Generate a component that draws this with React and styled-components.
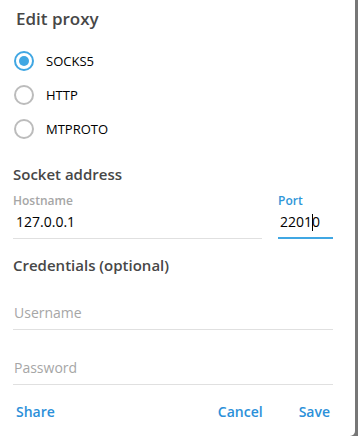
import React, { useState } from "react";
import styled, { createGlobalStyle } from "styled-components";

const GlobalStyle = createGlobalStyle`
  html, body {
    margin: 0;
    padding: 0;
    background: #777777;
  }
  body {
    font-family: "Open Sans", "Liberation Sans", sans-serif;
  }
`;

const Page = styled.div`
  width: 358px;
  height: 436px;
  overflow: hidden;
`;

const Dialog = styled.div`
  width: 355px;
  height: 436px;
  background: #ffffff;
  border-bottom-right-radius: 5px;
  box-sizing: border-box;
  display: flex;
  flex-direction: column;
  padding: 0 22px 0 13px;
`;

const Title = styled.h2`
  margin: 7px 0 0 3px;
  font-size: 17px;
  line-height: 24px;
  font-weight: 600;
  color: #474747;
`;

const RadioList = styled.div`
  display: flex;
  flex-direction: column;
  margin-top: 13px;
`;

const RadioRow = styled.label`
  display: flex;
  align-items: center;
  gap: 12px;
  height: 34px;
  padding-left: 1px;
  cursor: pointer;
`;

const RadioCircle = styled.span`
  box-sizing: border-box;
  width: 20px;
  height: 20px;
  border-radius: 50%;
  border: 2px solid ${(p) => (p.checked ? "#40a7e3" : "#bcbcbc")};
  display: flex;
  align-items: center;
  justify-content: center;

  &::after {
    content: "";
    width: 10px;
    height: 10px;
    border-radius: 50%;
    background: #40a7e3;
    display: ${(p) => (p.checked ? "block" : "none")};
  }
`;

const RadioText = styled.span`
  font-size: 13px;
  color: #000000;
`;

const Section = styled.h3`
  margin: ${(p) => p.top} 0 0 0;
  font-size: 15px;
  line-height: 20px;
  font-weight: 600;
  color: #474747;
`;

const AddressRow = styled.div`
  display: flex;
  gap: 16px;
  margin-top: 9px;
`;

const Field = styled.div`
  display: flex;
  flex-direction: column;
  width: ${(p) => p.width};
  border-bottom: ${(p) => (p.active ? "2px solid #40a7e3" : "1px solid #e0e0e0")};
  height: ${(p) => (p.active ? "44px" : "45px")};
`;

const FieldLabel = styled.span`
  font-size: 12px;
  line-height: 16px;
  font-weight: 600;
  color: ${(p) => (p.active ? "#3096d8" : "#a6a6a6")};
`;

const FieldValue = styled.span`
  margin-top: 2px;
  font-size: 14px;
  line-height: 22px;
  color: #000000;
  padding-left: ${(p) => p.pad || "3px"};
  display: flex;
  align-items: center;
`;

const Caret = styled.span`
  display: inline-block;
  width: 1px;
  height: 17px;
  background: #000000;
  margin: 0 -1px 0 0;
`;

const PlainField = styled.div`
  display: flex;
  align-items: flex-end;
  height: 54px;
  border-bottom: 1px solid #e0e0e0;
`;

const Placeholder = styled.span`
  font-size: 14px;
  line-height: 22px;
  color: #a6a6a6;
  padding: 0 0 5px 1px;
`;

const Buttons = styled.div`
  display: flex;
  align-items: center;
  margin-top: 17px;
  padding: 0 3px;
`;

const LinkButton = styled.button`
  background: none;
  border: none;
  padding: 0;
  font-family: inherit;
  font-size: 14px;
  font-weight: 600;
  line-height: 20px;
  color: #2b90d9;
  cursor: pointer;
  margin-left: ${(p) => p.gap || "0"};
`;

const Spacer = styled.div`
  flex: 1;
`;

const types = ["SOCKS5", "HTTP", "MTPROTO"];

export default function App() {
  const [type, setType] = useState("SOCKS5");

  return (
    <Page>
      <GlobalStyle />
      <Dialog>
        <Title>Edit proxy</Title>
        <RadioList>
          {types.map((t) => (
            <RadioRow key={t} onClick={() => setType(t)}>
              <RadioCircle checked={type === t} />
              <RadioText>{t}</RadioText>
            </RadioRow>
          ))}
        </RadioList>

        <Section top="18px">Socket address</Section>
        <AddressRow>
          <Field width="249px">
            <FieldLabel>Hostname</FieldLabel>
            <FieldValue>127.0.0.1</FieldValue>
          </Field>
          <Field width="55px" active>
            <FieldLabel active>Port</FieldLabel>
            <FieldValue pad="2px">
              2201
              <Caret />0
            </FieldValue>
          </Field>
        </AddressRow>

        <Section top="16px">Credentials (optional)</Section>
        <PlainField>
          <Placeholder>Username</Placeholder>
        </PlainField>
        <PlainField>
          <Placeholder>Password</Placeholder>
        </PlainField>

        <Buttons>
          <LinkButton>Share</LinkButton>
          <Spacer />
          <LinkButton>Cancel</LinkButton>
          <LinkButton gap="36px">Save</LinkButton>
        </Buttons>
      </Dialog>
    </Page>
  );
}
